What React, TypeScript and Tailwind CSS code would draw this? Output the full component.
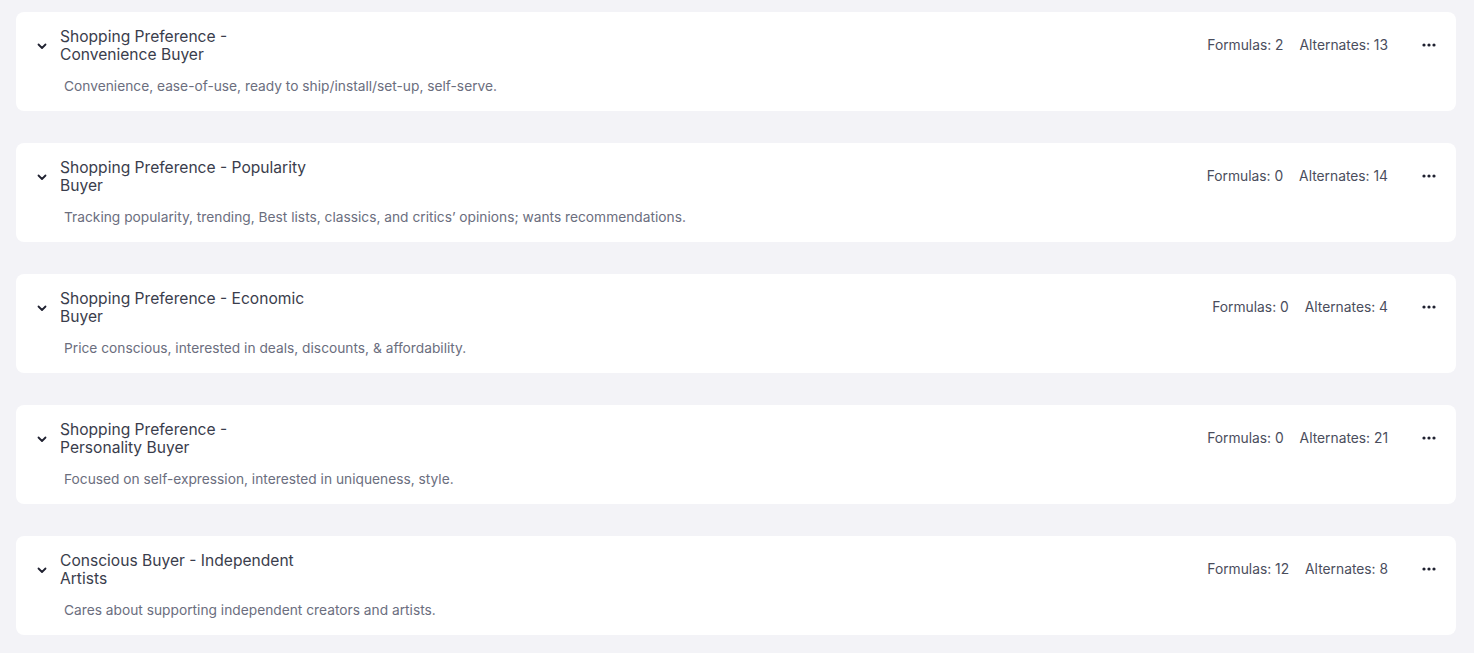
import React from "react";

type Segment = {
  title: string;
  description: string;
  formulas: number;
  alternates: number;
};

const segments: Segment[] = [
  {
    title: "Shopping Preference - Convenience Buyer",
    description: "Convenience, ease-of-use, ready to ship/install/set-up, self-serve.",
    formulas: 2,
    alternates: 13,
  },
  {
    title: "Shopping Preference - Popularity Buyer",
    description:
      "Tracking popularity, trending, Best lists, classics, and critics\u2019 opinions; wants recommendations.",
    formulas: 0,
    alternates: 14,
  },
  {
    title: "Shopping Preference - Economic Buyer",
    description: "Price conscious, interested in deals, discounts, & affordability.",
    formulas: 0,
    alternates: 4,
  },
  {
    title: "Shopping Preference - Personality Buyer",
    description: "Focused on self-expression, interested in uniqueness, style.",
    formulas: 0,
    alternates: 21,
  },
  {
    title: "Conscious Buyer - Independent Artists",
    description: "Cares about supporting independent creators and artists.",
    formulas: 12,
    alternates: 8,
  },
];

function Chevron() {
  return (
    <svg width="12" height="12" viewBox="0 0 12 12" fill="none" className="shrink-0">
      <path d="M2.5 4.5 6 8l3.5-3.5" stroke="#1f2130" strokeWidth="1.8" strokeLinecap="round" strokeLinejoin="round" />
    </svg>
  );
}

function Dots() {
  return (
    <svg width="14" height="4" viewBox="0 0 14 4" className="shrink-0">
      <circle cx="2" cy="2" r="1.6" fill="#1f2130" />
      <circle cx="7" cy="2" r="1.6" fill="#1f2130" />
      <circle cx="12" cy="2" r="1.6" fill="#1f2130" />
    </svg>
  );
}

function SegmentCard({ s }: { s: Segment }) {
  return (
    <div className="rounded-lg bg-white pt-[16px] pb-[15px] pl-[20px] pr-[20px]">
      <div className="flex items-center">
        <Chevron />
        <div className="ml-[12px] w-[252px] text-[15.6px] leading-[18px] text-[#3a3d4c]">{s.title}</div>
        <div className="ml-auto mb-[2px] flex items-center text-[13.8px] text-[#4a4d5c]">
          <span>Formulas: {s.formulas}</span>
          <span className="ml-[16px]">Alternates: {s.alternates}</span>
        </div>
        <button className="ml-[34px] mb-[2px] flex h-[14px] w-[14px] items-center justify-center">
          <Dots />
        </button>
      </div>
      <div className="mt-[12px] pl-[28px] text-[13.75px] leading-[20px] text-[#6b6e7e]">{s.description}</div>
    </div>
  );
}

export default function App() {
  return (
    <div
      className="min-h-[653px] bg-[#f3f3f7] pl-[16px] pr-[18px] pt-[12px] pb-[18px]"
      style={{ fontFamily: "Inter, 'Noto Sans', sans-serif" }}
    >
      <div className="flex flex-col gap-[32px]">
        {segments.map((s) => (
          <SegmentCard key={s.title} s={s} />
        ))}
      </div>
    </div>
  );
}
